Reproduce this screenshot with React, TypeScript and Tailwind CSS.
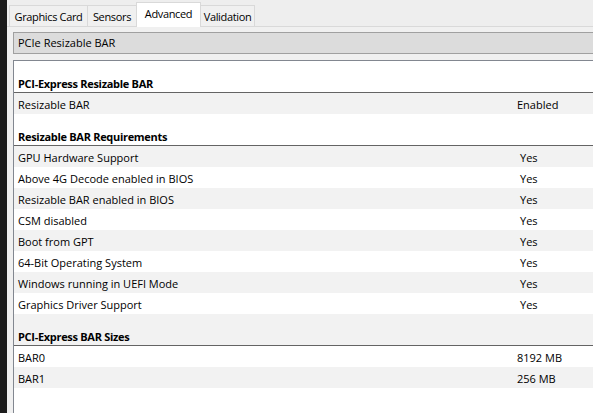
import React from "react";

type Row =
  | { kind: "section"; label: string }
  | { kind: "item"; label: string; value: string; yes?: boolean };

const rows: Row[] = [
  { kind: "section", label: "PCI-Express Resizable BAR" },
  { kind: "item", label: "Resizable BAR", value: "Enabled" },
  { kind: "section", label: "Resizable BAR Requirements" },
  { kind: "item", label: "GPU Hardware Support", value: "Yes", yes: true },
  { kind: "item", label: "Above 4G Decode enabled in BIOS", value: "Yes", yes: true },
  { kind: "item", label: "Resizable BAR enabled in BIOS", value: "Yes", yes: true },
  { kind: "item", label: "CSM disabled", value: "Yes", yes: true },
  { kind: "item", label: "Boot from GPT", value: "Yes", yes: true },
  { kind: "item", label: "64-Bit Operating System", value: "Yes", yes: true },
  { kind: "item", label: "Windows running in UEFI Mode", value: "Yes", yes: true },
  { kind: "item", label: "Graphics Driver Support", value: "Yes", yes: true },
  { kind: "section", label: "PCI-Express BAR Sizes" },
  { kind: "item", label: "BAR0", value: "8192 MB" },
  { kind: "item", label: "BAR1", value: "256 MB" },
];

export default function App() {
  return (
    <div
      className="flex w-[593px] h-[413px] overflow-hidden text-[11px] text-black"
      style={{ fontFamily: '"Open Sans", "Noto Sans", sans-serif' }}
    >
      <div className="w-[7px] shrink-0 bg-[#1c1c1c]" />
      <div className="flex-1 flex flex-col bg-[#f0f0f0] min-w-0">
        {/* Tabs */}
        <div className="h-[27px] shrink-0 flex items-end pl-[2px] border-b border-[#d9d9d9] bg-[#eeeeee] tracking-[-0.35px]">
          <div className="w-[79px] h-[21px] flex items-center justify-center border border-b-0 border-[#d9d9d9] bg-[#f0f0f0] leading-none">
            Graphics Card
          </div>
          <div className="w-[50px] h-[21px] -ml-px flex items-center justify-center border border-b-0 border-[#d9d9d9] bg-[#f0f0f0] leading-none">
            Sensors
          </div>
          <div className="relative z-10 w-[65px] h-[25px] -ml-px -mb-px flex items-start pt-[5px] justify-center border border-b-0 border-[#d9d9d9] bg-white leading-none">
            Advanced
          </div>
          <div className="w-[55px] h-[21px] -ml-px flex items-center justify-center border border-b-0 border-[#d9d9d9] bg-[#f0f0f0] leading-none">
            Validation
          </div>
        </div>

        {/* Title box */}
        <div className="mt-[5px] ml-[6px] h-[22px] shrink-0 flex items-center pl-[4px] bg-[#dcdcdc] border-y border-l border-[#a0a0a0]">
          PCIe Resizable BAR
        </div>

        {/* List */}
        <div className="mt-[6px] ml-[6px] flex-1 bg-white border-t border-l border-[#828790] min-h-0 overflow-hidden">
          {rows.map((r, i) => {
            const bg = i % 2 === 1 ? "bg-[#f2f2f2]" : "bg-white";
            if (r.kind === "section") {
              return (
                <div
                  key={i}
                  className={`h-[32px] flex items-end pl-[4px] font-bold tracking-[-0.3px] border-b border-[#646464] leading-[16px] ${bg}`}
                >
                  {r.label}
                </div>
              );
            }
            return (
              <div key={i} className={`h-[21px] flex items-center pl-[4px] pt-[2px] leading-[16px] ${bg}`}>
                <span className="w-[499px] shrink-0">{r.label}</span>
                <span className={r.yes ? "pl-[3px]" : ""}>{r.value}</span>
              </div>
            );
          })}
        </div>
      </div>
    </div>
  );
}
